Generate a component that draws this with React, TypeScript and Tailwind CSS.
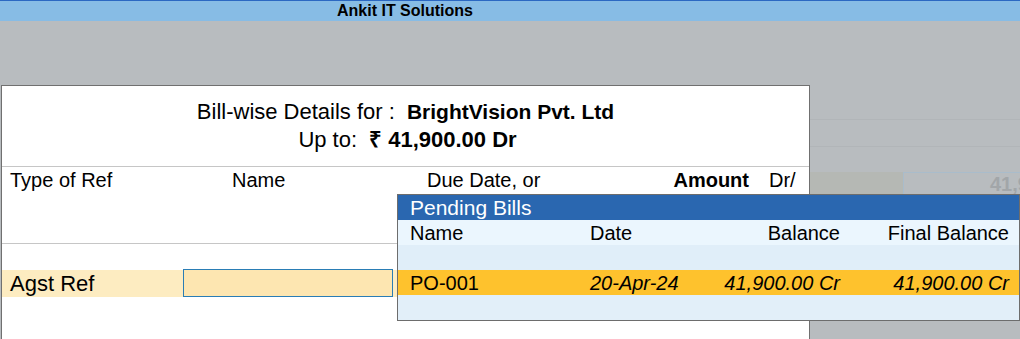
import React from "react";

// Tally-style bill-wise details screen with pending bills popup
export default function App() {
  return (
    <div className="w-[1020px] h-[339px] overflow-hidden bg-[#b8bcbf] flex flex-col relative font-['Liberation_Sans',Arial,sans-serif] text-black">
      {/* title bar */}
      <div className="h-[21px] border-t border-[#2b68c2] bg-[#87bce5] flex items-center">
        <div className="w-[810px] text-center text-[16px] font-bold leading-none">
          Ankit IT Solutions
        </div>
      </div>

      <div className="flex flex-1">
        {/* main panel */}
        <div className="w-[810px] pt-[64px]">
          <div className="ml-px w-[809px] h-full border-l border-t border-r border-[#707070] bg-white">
            <div className="py-[12px] text-[22px] leading-[28px] text-center">
              <div>
                Bill-wise Details for :
                <span className="ml-[12px] font-bold text-[21px]">BrightVision Pvt. Ltd</span>
              </div>
              <div className="pl-[4px]">
                Up to:
                <span className="ml-[12px] font-bold">₹ 41,900.00 Dr</span>
              </div>
            </div>

            <div className="h-px bg-[#c6c6c6]" />

            <div className="h-[76px] flex text-[20px] leading-[26px]">
              <div className="w-[230px] pl-[8px]">Type of Ref</div>
              <div className="w-[195px]">Name</div>
              <div className="flex-1">Due Date, or</div>
              <div className="font-bold">Amount</div>
              <div className="w-[40px] ml-[20px]">Dr/</div>
            </div>

            <div className="h-px bg-[#c6c6c6]" />

            <div className="h-[26px]" />

            <div className="h-[27px] bg-[#fdecc1] flex items-center text-[22px]">
              <div className="w-[181px] pl-[8px]">Agst Ref</div>
              <div className="w-[210px] h-[28px] -mt-px border border-[#2a7db5] bg-[#fde6b1]" />
            </div>
          </div>
        </div>

        {/* background fragments on the right */}
        <div className="flex-1 flex flex-col">
          <div className="h-[98px]" />
          <div className="h-px bg-[#b1b5b8]" />
          <div className="h-[26px]" />
          <div className="h-px bg-[#b1b5b8]" />
          <div className="h-[25px]" />
          <div className="flex h-[40px]">
            <div className="w-[93px] bg-[#b5b8b4]" />
            <div className="flex-1 border border-r-0 border-[#a9bccb] pl-[86px] text-[20px] leading-[22px] font-bold text-[#a2a6a9] whitespace-nowrap overflow-hidden">
              41,9
            </div>
          </div>
        </div>
      </div>

      {/* pending bills popup */}
      <div className="absolute left-[397px] top-[194px] w-[623px] border border-[#6d6d6d] text-[20px]">
        <div className="h-[25px] bg-[#2a67b0] text-white pl-[12px] text-[21px] leading-[25px]">
          Pending Bills
        </div>
        <div className="h-[25px] bg-[#ebf6fe] flex items-center pl-[12px] pr-[10px]">
          <div className="w-[180px]">Name</div>
          <div className="w-[100px]">Date</div>
          <div className="w-[150px] text-right">Balance</div>
          <div className="flex-1 text-right">Final Balance</div>
        </div>
        <div className="h-[25px] bg-[#e0eef9]" />
        <div className="h-[25px] bg-[#fec22d] flex items-center pl-[12px] pr-[10px]">
          <div className="w-[180px]">PO-001</div>
          <div className="w-[100px] italic">20-Apr-24</div>
          <div className="w-[150px] text-right italic">41,900.00 Cr</div>
          <div className="flex-1 text-right italic">41,900.00 Cr</div>
        </div>
        <div className="h-[25px] bg-[#e2eff9]" />
      </div>
    </div>
  );
}
